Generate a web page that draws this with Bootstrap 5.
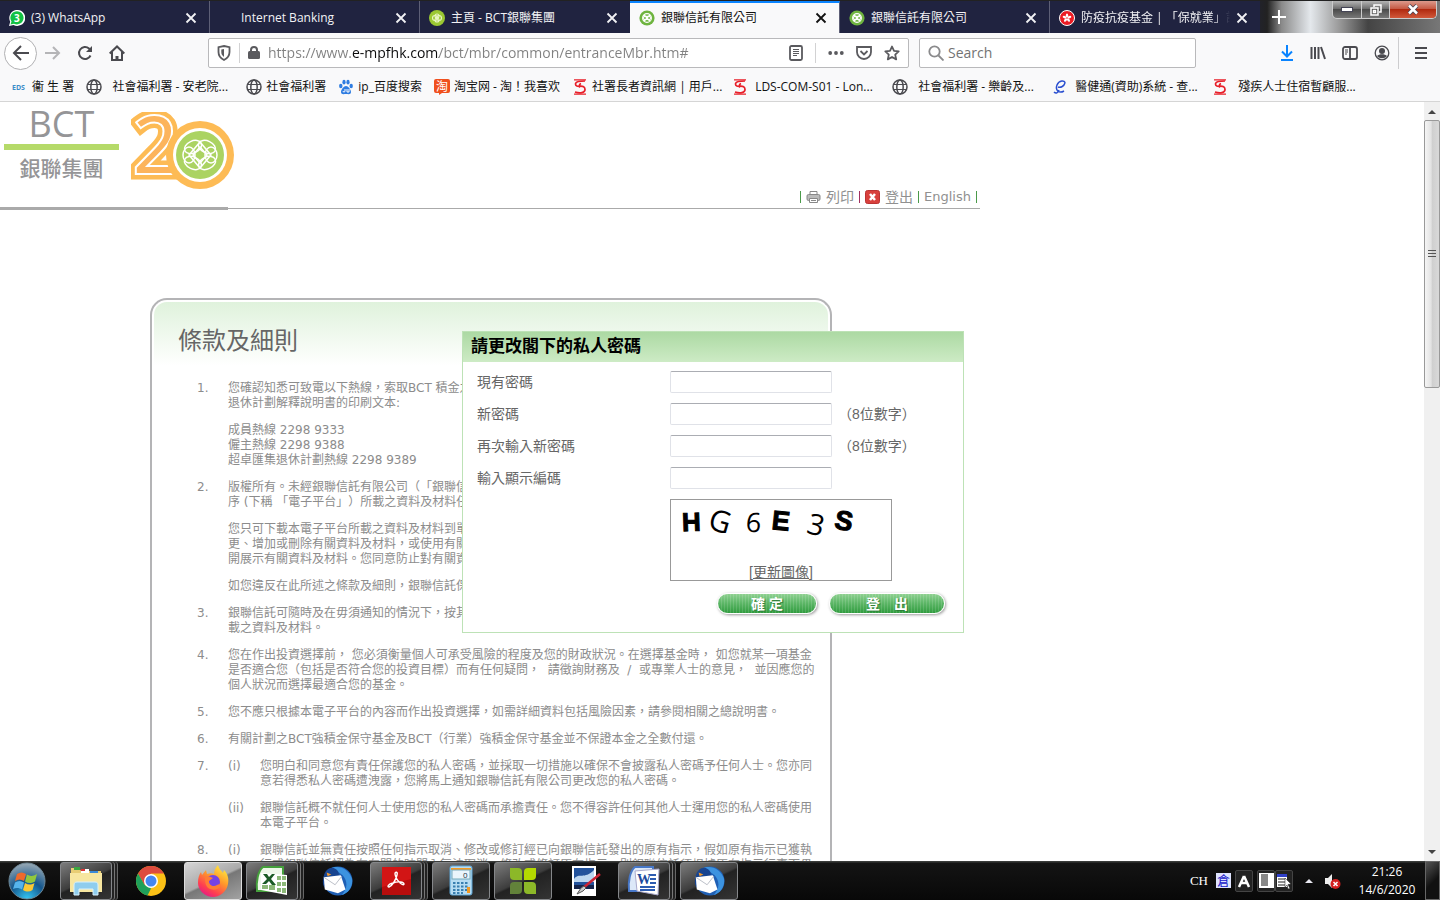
<!DOCTYPE html>
<html lang="zh-Hant">
<head>
<meta charset="UTF-8">
<meta name="viewport" content="width=device-width, initial-scale=1.0">
<title>銀聯信託有限公司</title>
<link href="https://cdn.jsdelivr.net/npm/bootstrap@5.3.0/dist/css/bootstrap.min.css" rel="stylesheet">
<style>
    body { font: 12px/16px "Open Sans", "Noto Sans CJK TC", sans-serif; color: #111; background: #fff; text-spacing-trim: space-all; }
    button { font: inherit; color: inherit; }
    svg { display: block; flex: none; }
    .plain-btn { border: 0; padding: 0; background: none; }

    /* browser window */
    .title-strip { height: 33px; background: linear-gradient(90deg, #202340 86%, #222 88%, #8a8a8a 89%, #e4e8ec 91%, #9a9a9a 93%, #444 95%, #777); border-top: 1px solid #222; }
    .tab-item { width: 210px; padding: 2px 12px 0 9px; gap: 6px; background: #202340; color: #f2f2f5; border-right: 1px solid #5d5f76; }
    .tab-item.current { background: #f9f9fa; color: #111; border-top: 2px solid #0a84ff; padding-top: 0; }
    .tab-icon { width: 16px; height: 16px; }
    .tab-fade { -webkit-mask-image: linear-gradient(90deg, #000 88%, transparent); }
    .win-buttons { height: 18px; border: 1px solid #ccc; border-top: 0; border-radius: 0 0 5px 5px; overflow: hidden; background: linear-gradient(#b5b5b5, #6d6d6d 45%, #4b4b4b 50%, #777); margin-right: 3px; }
    .win-buttons button { width: 28px; }
    .win-buttons button + button { border-left: 1px solid #ccc; }
    .win-buttons .win-close { width: 47px; background: linear-gradient(#dc9a8c, #c65b45 45%, #b12a10 50%, #d1583a); }
    .nav-strip { height: 40px; background: #f9f9fa; padding: 0 13px 0 4px; color: #4a4a4f; }
    .back-btn { width: 33px; height: 33px; border: 1px solid #b1b1b3; border-radius: 50%; background: #fff; }
    .field-box { height: 30px; border: 1px solid #b9b9bb; border-radius: 2px; background: #fff; }
    .field-box input { border: 0; outline: 0; padding: 0; min-width: 0; font: 14px/20px "Open Sans", sans-serif; color: #737373; background: transparent; }
    .field-box .url-input { background: linear-gradient(90deg, #808080 84px, #0c0c0d 84px, #0c0c0d 171px, #808080 171px); -webkit-background-clip: text; background-clip: text; -webkit-text-fill-color: transparent; }
    .reader-rule { margin: 0 12px; }
    .search-box { width: 277px; margin-left: 10px; }
    .search-box input::placeholder { color: #737373; opacity: 1; }
    .nav-gap { width: 83px; }
    .marks-strip { height: 29px; background: #f9f9fa; border-bottom: 1px solid #d5d5d5; padding-left: 12px; }
    .mark-item { gap: 4px; padding-right: 12px; color: #111; text-decoration: none; white-space: pre; }
    .mark-wide { width: 160px; padding-right: 0; }

    /* page */
    .page-view { min-height: 0; }
    .site-head, .rule-row { max-width: 980px; }
    .site-head { height: 105px; padding: 2px 3px 0 4px; }
    .logo-word { width: 115px; color: #959597; }
    .logo-en { font-size: 36px; line-height: 40px; }
    .logo-bar { height: 6px; background: #b5da69; }
    .logo-zh { font-size: 21px; line-height: 36px; font-weight: 500; }
    .logo-mark { margin: 8px 0 0 12px; }
    .head-links { gap: 5px; font: 13px/20px "DejaVu Sans", "Noto Sans CJK TC", sans-serif; color: #909090; }
    .head-links a { color: #909090; text-decoration: none; }
    .head-links .zh-link { font-size: 14px; }
    .head-links .sep { width: 1px; height: 12px; background: #4a9a4a; }
    .head-links .sep-alt { background: #a03060; }
    .rule-thick { width: 228px; height: 3px; background: #aaa; }
    .rule-thin { height: 1px; background: #aaa; }
    .terms-panel { max-width: 682px; margin: 88px 0 0 150px; padding: 2px; border: 2px solid #b4b4b6; border-bottom: 0; border-radius: 17px 17px 0 0; }
    .terms-inner { border-radius: 13px 13px 0 0; background: linear-gradient(#dff2dc, #fff 64px); padding: 22px 16px 0 24px; }
    .terms-inner h1 { font-size: 24px; line-height: 32px; color: #666; margin: 0 0 25px; font-weight: 400; }
    .terms-list { font: 12px/15px "DejaVu Sans", "Noto Sans CJK TC", sans-serif; color: #8c8c8c; padding-left: 19px; white-space: nowrap; }
    .terms-list p { margin: 0 0 12px; }
    .term-no { width: 31px; flex: none; }
    .term-sub { width: 32px; flex: none; }

    /* password dialog */
    .pwd-dialog { left: 462px; top: 229px; width: 502px; height: 302px; background: #fff; border: 1px solid #bde2b6; color: #666; font: 14px/22px "Liberation Sans", "Noto Sans CJK TC", sans-serif; }
    .pwd-dialog h2 { margin: 0; padding: 0 8px; font-size: 17px; line-height: 30px; font-weight: 700; color: #000; background: linear-gradient(#acd9a3, #cdebc5); }
    .pwd-form { padding: 9px 18px 0 14px; }
    .pwd-row { margin-bottom: 10px; }
    .pwd-row label, .pwd-space { width: 193px; flex: none; }
    .pwd-row input { width: 162px; height: 22px; padding: 1px 4px; border: 1px solid #e0e2e8; border-top-color: #abadb3; border-radius: 2px; margin-right: 6px; }
    .captcha { width: 222px; height: 82px; border: 1px solid #999; }
    .captcha button { color: #666; line-height: 16px; text-decoration: underline; }
    .green-btn { height: 21px; border: 1px solid #fff; border-radius: 11px; color: #fff; font-size: 14px; line-height: 18px; font-weight: 700; text-shadow: 1px 1px 1px #2c7a35; box-shadow: 1px 1px 3px #999; background: repeating-linear-gradient(90deg, rgba(255,255,255,.13) 0 1px, transparent 1px 3px), linear-gradient(#8fd191, #5fb869 45%, #309c3f); }
    .ok-btn { width: 100px; }
    .out-btn { width: 116px; }

    .side-scroll { width: 16px; background: #f0f0f0; flex: none; }
    .side-scroll button { height: 18px; }
    .scroll-thumb { height: 268px; border: 1px solid #999; border-radius: 2px; background: linear-gradient(90deg, #f5f5f5, #e2e2e2 45%, #cfcfcf 50%, #d9d9d9); }

    /* taskbar */
    .task-strip { height: 40px; background: linear-gradient(#3a3c3a 1px, #141414 2px, #080808); color: #fff; padding-left: 8px; }
    .task-btn { width: 58px; height: 38px; border: 1px solid transparent; border-radius: 3px; margin-right: 4px; padding: 0; background: none; }
    .task-open { border-color: #85878a; background: linear-gradient(155deg, #7c7c7c, #3d3d3d 48%, #222 52%, #343434); }
    .task-front { border-color: #ddd; background: linear-gradient(155deg, #d5d5d5, #aaa 48%, #777 52%, #a2a2a2); }
    .task-stack { width: 52px; margin-right: 10px; box-shadow: 2px 0 #222, 3px 0 #777, 5px 0 #222, 6px 0 #666; }
    .start-btn { margin-right: 14px; }
    .tray-lang { font: 13px/16px "Liberation Serif", serif; }
    .tray-box { width: 18px; height: 22px; border: 1px solid #444; border-radius: 2px; background: #222; }
    .clock { width: 76px; line-height: 18px; }
    .peek-btn { width: 15px; border: 1px solid #666; background: linear-gradient(135deg, #555, #111 55%); }
</style>
</head>
<body class="d-flex flex-column vh-100 overflow-hidden">

    <!-- shared icons -->
    <svg width="0" height="0" class="position-absolute">
        <defs>
            <symbol id="i-close" viewBox="0 0 12 12"><path d="M1.5 1.5l9 9M10.5 1.5l-9 9" stroke="currentColor" stroke-width="1.8"/></symbol>
            <symbol id="i-bct" viewBox="0 0 16 16"><circle cx="8" cy="8" r="7.6" fill="#6eb43f"/><g fill="none" stroke="#fff" stroke-width="1.1"><circle cx="8" cy="8" r="4.4"/><circle cx="6.4" cy="8" r="1.9"/><circle cx="9.6" cy="8" r="1.9"/><path d="M5 5l6 6M11 5l-6 6"/></g></symbol>
            <symbol id="i-globe" viewBox="0 0 16 16"><g fill="none" stroke="#4a4a4f" stroke-width="1.5"><circle cx="8" cy="8" r="7"/><ellipse cx="8" cy="8" rx="3.2" ry="7"/><path d="M1.5 5.5h13M1.5 10.5h13" stroke-width="1.2"/></g></symbol>
            <symbol id="i-swd" viewBox="0 0 16 16"><path d="M2 .8h12M2 15.2h12" stroke="#e8202a" stroke-width="1.2"/><path d="M13 2C9 2 3.500 2.500 3.500 5c0 2 2 2.500 4.500 2.200C11 7 13 8 13 10.500c0 3.500-5 4-10 2.500M9 4.500c-2 1-2 2.500-1 4" fill="none" stroke="#e8202a" stroke-width="1.7"/></symbol>
            <symbol id="i-bird" viewBox="0 0 34 34"><circle cx="18" cy="17" r="15.500" fill="#1f5fb4"/><path d="M9 4C18-1 30 4 33 15c1 8-4 15-11 17 6-7 7-14 1-21-4-4-9-5-13-7z" fill="#3c93e0"/><path d="M3 12C4 5 11 1 15 4c4 2 5 6 3 10L4 24C1 20 2 16 3 12z" fill="#174490"/><path d="M3 13l18-2 5 15-8 4-14-4z" fill="#fff"/><path d="M3 13l12 8 7-9" fill="none" stroke="#b8bcc4"/><path d="M6 8l5 2-4 2z" fill="#f29a2e"/></symbol>
        </defs>
    </svg>

    <header>
        <div class="title-strip d-flex">
            <div class="tab-item d-flex align-items-center">
                <svg class="tab-icon" viewBox="0 0 16 16"><path d="M0 16l1.200-4.300A8 8 0 1 1 4.500 15z" fill="#fff"/><path d="M1.500 14.500l1-3A6.600 6.600 0 1 1 5 13.700z" fill="#13c143"/><text x="5" y="12" font-size="10" font-weight="700" fill="#fff">3</text></svg>
                <span class="flex-fill">(3) WhatsApp</span>
                <button class="plain-btn" aria-label="Close"><svg width="12" height="12"><use href="#i-close"/></svg></button>
            </div>
            <div class="tab-item d-flex align-items-center">
                <span class="tab-icon"></span>
                <span class="flex-fill">Internet Banking</span>
                <button class="plain-btn" aria-label="Close"><svg width="12" height="12"><use href="#i-close"/></svg></button>
            </div>
            <div class="tab-item d-flex align-items-center border-end-0">
                <svg class="tab-icon" viewBox="0 0 16 16"><circle cx="8" cy="8" r="8" fill="#9bc832"/><g fill="none" stroke="#e8f5c4" stroke-width="1.100"><circle cx="6" cy="8" r="2.500"/><circle cx="10" cy="8" r="2.500"/><circle cx="8" cy="6" r="2"/><circle cx="8" cy="10" r="2"/></g></svg>
                <span class="flex-fill">主頁 - BCT銀聯集團</span>
                <button class="plain-btn" aria-label="Close"><svg width="12" height="12"><use href="#i-close"/></svg></button>
            </div>
            <div class="tab-item current d-flex align-items-center">
                <svg class="tab-icon"><use href="#i-bct"/></svg>
                <span class="flex-fill">銀聯信託有限公司</span>
                <button class="plain-btn" aria-label="Close"><svg width="12" height="12"><use href="#i-close"/></svg></button>
            </div>
            <div class="tab-item d-flex align-items-center">
                <svg class="tab-icon"><use href="#i-bct"/></svg>
                <span class="flex-fill">銀聯信託有限公司</span>
                <button class="plain-btn" aria-label="Close"><svg width="12" height="12"><use href="#i-close"/></svg></button>
            </div>
            <div class="tab-item d-flex align-items-center border-end-0">
                <svg class="tab-icon" viewBox="0 0 16 16"><circle cx="8" cy="8" r="7.500" fill="#ec1c24" stroke="#fff"/><g fill="#fff"><ellipse cx="8" cy="5.500" rx="1.200" ry="2"/><ellipse cx="8" cy="5.500" rx="1.200" ry="2" transform="rotate(72 8 8)"/><ellipse cx="8" cy="5.500" rx="1.200" ry="2" transform="rotate(144 8 8)"/><ellipse cx="8" cy="5.500" rx="1.200" ry="2" transform="rotate(216 8 8)"/><ellipse cx="8" cy="5.500" rx="1.200" ry="2" transform="rotate(288 8 8)"/></g></svg>
                <span class="flex-fill text-nowrap overflow-hidden tab-fade">防疫抗疫基金 | 「保就業」計劃</span>
                <button class="plain-btn" aria-label="Close"><svg width="12" height="12"><use href="#i-close"/></svg></button>
            </div>
            <button class="plain-btn ms-2 ps-1 text-white" aria-label="New tab"><svg width="14" height="14"><path d="M7 0v14M0 7h14" stroke="currentColor" stroke-width="2"/></svg></button>
            <div class="win-buttons d-flex ms-auto">
                <button class="plain-btn d-flex justify-content-center align-items-center" aria-label="Minimize"><svg width="12" height="6"><rect x=".5" y=".5" width="11" height="4" fill="#fff" stroke="#445"/></svg></button>
                <button class="plain-btn d-flex justify-content-center align-items-center" aria-label="Restore"><svg width="12" height="12" fill="none" stroke="#fff" stroke-width="1.500"><path d="M4 3V1h7v7H9"/><rect x="1" y="4" width="7" height="7"/><rect x="3.500" y="6.500" width="2" height="2"/></svg></button>
                <button class="plain-btn win-close d-flex justify-content-center align-items-center" aria-label="Close window"><svg width="12" height="11"><path d="M2 1.500l8 8M10 1.500l-8 8" stroke="#445" stroke-width="4"/><path d="M2 1.500l8 8M10 1.500l-8 8" stroke="#fff" stroke-width="2.500"/></svg></button>
            </div>
        </div>

        <div class="nav-strip d-flex align-items-center">
            <button class="back-btn plain-btn d-flex justify-content-center align-items-center me-2" aria-label="Back"><svg width="18" height="16" fill="none" stroke="currentColor" stroke-width="2"><path d="M17 8H2M9 1L2 8l7 7"/></svg></button>
            <button class="plain-btn me-3" aria-label="Forward"><svg width="16" height="16" fill="none" stroke="#b5b5b7" stroke-width="2"><path d="M0 8h14M8 2l6 6-6 6"/></svg></button>
            <button class="plain-btn me-3" aria-label="Reload"><svg width="16" height="16" fill="none" stroke="currentColor" stroke-width="2"><path d="M13.500 10.500A6 6 0 1 1 12 3.500l2 2.500"/><path d="M15 1v6H9z" fill="currentColor" stroke="none"/></svg></button>
            <button class="plain-btn" aria-label="Home"><svg width="16" height="16" fill="none" stroke="currentColor" stroke-width="2"><path d="M.7 8.500L8 1.500l7.300 7M3 7v8h10V7"/><path d="M8 15v-4" stroke-width="3"/></svg></button>
            <div class="nav-gap flex-shrink-1"></div>
            <div class="field-box d-flex align-items-center flex-fill px-2">
                <svg width="14" height="16" fill="none" stroke="#5a5a5e" stroke-width="1.800"><path d="M7 1l5.500 1.200V7c0 4-2.500 6.500-5.500 8-3-1.500-5.500-4-5.500-8V2.200z"/><path d="M7 4v8c-2-1.500-2.700-3-2.700-5V4.500z" fill="#5a5a5e" stroke="none"/></svg>
                <span class="vr mx-2 my-1 opacity-10"></span>
                <svg width="12" height="16"><rect y="6" width="12" height="8" rx="1.500" fill="#5a5a5e"/><path d="M3 7V5a3 3 0 0 1 6 0v2" fill="none" stroke="#5a5a5e" stroke-width="2"/></svg>
                <input class="url-input flex-fill ms-2" type="text" aria-label="Address" value="https://www.e-mpfhk.com/bct/mbr/common/entranceMbr.htm#">
                <svg width="14" height="16" fill="none" stroke="#5a5a5e"><rect x="1" y="1" width="12" height="14" rx="1.500" stroke-width="1.800"/><path d="M4 4.500h6M4 6.500h6M4 8.500h6M4 10.500h4"/></svg>
                <span class="vr reader-rule my-1 opacity-10"></span>
                <svg width="16" height="16" fill="#5a5a5e"><circle cx="2.200" cy="8" r="1.900"/><circle cx="8" cy="8" r="1.900"/><circle cx="13.800" cy="8" r="1.900"/></svg>
                <svg class="mx-2 ps-1" width="20" height="16" fill="none" stroke="#5a5a5e" stroke-width="1.800"><path d="M1 2h14v5a7 7 0 0 1-14 0z"/><path d="M4.500 6L8 9.500 11.500 6"/></svg>
                <svg class="ms-1" width="16" height="16"><path d="M8 1.500l2 4.400 4.700.5-3.500 3.200 1 4.800L8 12l-4.200 2.400 1-4.800L1.300 6.400 6 5.900z" fill="none" stroke="#5a5a5e" stroke-width="1.800" stroke-linejoin="round"/></svg>
            </div>
            <div class="field-box search-box d-flex align-items-center px-2">
                <svg width="16" height="16" fill="none" stroke="#8a8a8c" stroke-width="1.800"><circle cx="6.500" cy="6.500" r="5.200"/><path d="M10.500 10.500l5 5"/></svg>
                <input class="flex-fill ms-1" type="search" aria-label="Search" placeholder="Search">
            </div>
            <div class="d-flex align-items-center gap-3 ms-5 ps-4">
                <button class="plain-btn ms-2 ps-1" aria-label="Downloads"><svg width="14" height="16" fill="none" stroke="#0a84ff" stroke-width="2"><path d="M7 0v11M2 6.500l5 5 5-5M1 15h12"/></svg></button>
                <button class="plain-btn" aria-label="Library"><svg width="16" height="16" stroke="currentColor" stroke-width="2"><path d="M1.500 2v12M5 2v12M8.500 2v12M11 2l4 12"/></svg></button>
                <button class="plain-btn" aria-label="Sidebar"><svg width="16" height="16" fill="none" stroke="currentColor"><rect x="1" y="2" width="14" height="12" rx="2" stroke-width="1.800"/><path d="M8 2v12" stroke-width="1.800"/><path d="M3 5h3M3 7h3M3 9h2"/></svg></button>
                <button class="plain-btn" aria-label="Account"><svg width="16" height="16"><circle cx="8" cy="8" r="6.800" fill="none" stroke="currentColor" stroke-width="1.300"/><circle cx="8" cy="6" r="3" fill="currentColor"/><path d="M3 11c2-2.500 8-2.500 10 0-2.500 3-7.500 3-10 0z" fill="currentColor"/></svg></button>
            </div>
            <span class="vr my-1 ms-2 me-3"></span>
            <button class="plain-btn" aria-label="Menu"><svg width="12" height="14" stroke="currentColor" stroke-width="2"><path d="M0 2h12M0 7h12M0 12h12"/></svg></button>
        </div>

        <nav class="marks-strip d-flex align-items-center">
            <a class="mark-item d-flex" href="#"><svg width="16" height="16"><text x="0" y="11" font-size="7" font-weight="700" fill="#3b8cc8">EDS</text></svg>衞 生 署</a>
            <a class="mark-item mark-wide d-flex" href="#"><svg width="16" height="16"><use href="#i-globe"/></svg>  社會福利署 - 安老院...</a>
            <a class="mark-item d-flex" href="#"><svg width="16" height="16"><use href="#i-globe"/></svg>社會福利署</a>
            <a class="mark-item d-flex" href="#"><svg width="16" height="16" fill="#2f7de1"><ellipse cx="2.800" cy="7" rx="1.700" ry="2.300"/><ellipse cx="6" cy="3.200" rx="1.600" ry="2.400"/><ellipse cx="10" cy="3.200" rx="1.600" ry="2.400"/><ellipse cx="13.200" cy="7" rx="1.700" ry="2.300"/><path d="M8 7c2 0 5 3.500 5 6 0 3-3 2-5 2s-5 1-5-2c0-2.500 3-6 5-6z"/><path d="M5 12a1 1 0 1 0 2 0v-2M9 10v3h2v-3" fill="none" stroke="#fff"/></svg>ip_百度搜索</a>
            <a class="mark-item d-flex" href="#"><svg width="16" height="16"><path d="M2 0h12a2 2 0 0 1 2 2v10a2 2 0 0 1-2 2H8l-3 2v-2H2a2 2 0 0 1-2-2V2a2 2 0 0 1 2-2z" fill="#f0501e"/><text x="2" y="12" font-size="12" fill="#fff">淘</text></svg>淘宝网 - 淘！我喜欢</a>
            <a class="mark-item mark-wide d-flex" href="#"><svg width="16" height="16"><use href="#i-swd"/></svg>社署長者資訊網 | 用戶...</a>
            <a class="mark-item mark-wide d-flex" href="#"><svg width="16" height="16"><use href="#i-swd"/></svg> LDS-COM-S01 - Lon...</a>
            <a class="mark-item mark-wide d-flex" href="#"><svg width="16" height="16"><use href="#i-globe"/></svg>  社會福利署 - 樂齡及...</a>
            <a class="mark-item mark-wide d-flex" href="#"><svg width="16" height="16" fill="none" stroke="#2a4fd0" stroke-width="1.500"><path d="M13 4C13 1 7 1 5 6S7 15 12 12M6 8c3 1 6-1 7-4M2 13c2 2 4 1 5-2"/></svg> 醫健通(資助)系統 - 查...</a>
            <a class="mark-item mark-wide d-flex" href="#"><svg width="16" height="16"><use href="#i-swd"/></svg>  殘疾人士住宿暫顧服...</a>
        </nav>
    </header>

    <div class="page-view flex-fill d-flex overflow-hidden">
        <main class="flex-fill position-relative overflow-hidden">
            <div class="site-head d-flex">
                <div class="logo-word text-center">
                    <div class="logo-en">BCT</div>
                    <div class="logo-bar"></div>
                    <div class="logo-zh">銀聯集團</div>
                </div>
                <svg class="logo-mark" width="106" height="78" viewBox="0 0 106 78">
                    <g font-family="Open Sans" font-size="78" font-weight="400" fill="#fcb45c">
                        <text x="2" y="61" stroke="#fdbb55" stroke-width="13">2</text>
                        <text x="2" y="61" stroke="#fff" stroke-width="4">2</text>
                        <text x="2" y="61">2</text>
                    </g>
                    <circle cx="69" cy="43" r="34" fill="#fdbb55"/>
                    <circle cx="69" cy="43" r="27" fill="#fff"/>
                    <circle cx="69" cy="43" r="24" fill="#abd362"/>
                    <g fill="none" stroke="#fff" stroke-width="1.500">
                        <ellipse cx="62" cy="35" rx="9" ry="6" transform="rotate(-25 62 35)"/><ellipse cx="76" cy="35" rx="9" ry="6" transform="rotate(25 76 35)"/>
                        <ellipse cx="62" cy="51" rx="9" ry="6" transform="rotate(25 62 51)"/><ellipse cx="76" cy="51" rx="9" ry="6" transform="rotate(-25 76 51)"/>
                        <ellipse cx="58" cy="43" rx="6" ry="8"/><ellipse cx="80" cy="43" rx="6" ry="8"/>
                        <path d="M58 43l11-13 11 13-11 13z"/><path d="M62 43l7-8 7 8-7 8z"/>
                    </g>
                </svg>
                <div class="head-links d-flex align-items-center align-self-end ms-auto">
                    <span class="sep"></span>
                    <svg width="15" height="14" fill="#fff" stroke="#888"><path d="M4 5V1.500h7V5"/><rect x="1" y="4.500" width="13" height="6" rx="1.500" fill="#bbb"/><path d="M3.500 8.500h8v4h-8zM5 10.500h5"/></svg>
                    <a class="zh-link" href="#">列印</a>
                    <span class="sep sep-alt"></span>
                    <svg width="15" height="14"><rect x=".5" y=".5" width="14" height="13" rx="2" fill="#d8403c" stroke="#b33"/><path d="M5 4l5 6M10 4l-5 6" stroke="#fff" stroke-width="2.500"/></svg>
                    <a class="zh-link" href="#">登出</a>
                    <span class="sep"></span>
                    <a href="#">English</a>
                    <span class="sep"></span>
                </div>
            </div>
            <div class="rule-row d-flex align-items-center">
                <div class="rule-thick"></div>
                <div class="rule-thin flex-fill"></div>
            </div>

            <section class="terms-panel">
                <div class="terms-inner">
                    <h1>條款及細則</h1>
                    <div class="terms-list">
                        <div class="d-flex">
                            <div class="term-no">1.</div>
                            <div>
                                <p>您確認知悉可致電以下熱線，索取BCT 積金之選、BCT（強積金）行業計劃及超卓匯集<br>退休計劃解釋說明書的印刷文本:</p>
                                <p>成員熱線 2298 9333<br>僱主熱線 2298 9388<br>超卓匯集退休計劃熱線 2298 9389</p>
                            </div>
                        </div>
                        <div class="d-flex">
                            <div class="term-no">2.</div>
                            <div>
                                <p>版權所有。未經銀聯信託有限公司（「銀聯信託」）事先書面同意，本網站及流動應用程<br>序 (下稱 「電子平台」）所載之資料及材料任何部分均不得複製或分發。</p>
                                <p>您只可下載本電子平台所載之資料及材料到單一電腦作個人用途。您不得複製、修改、變<br>更、增加或刪除有關資料及材料，或使用有關資料及材料作任何商業用途，亦不得向外公<br>開展示有關資料及材料。您同意防止對有關資料及材料作任何未經授權之複製。</p>
                                <p>如您違反在此所述之條款及細則，銀聯信託保留一切追究權利。</p>
                            </div>
                        </div>
                        <div class="d-flex">
                            <div class="term-no">3.</div>
                            <p>銀聯信託可隨時及在毋須通知的情況下，按其絕對酌情權更改或修訂本電子平台及其所<br>載之資料及材料。</p>
                        </div>
                        <div class="d-flex">
                            <div class="term-no">4.</div>
                            <p>您在作出投資選擇前， 您必須衡量個人可承受風險的程度及您的財政狀況。在選擇基金時， 如您就某一項基金<br>是否適合您（包括是否符合您的投資目標）而有任何疑問，&nbsp; 請徵詢財務及 &nbsp;/ &nbsp;或專業人士的意見，&nbsp; 並因應您的<br>個人狀況而選擇最適合您的基金。</p>
                        </div>
                        <div class="d-flex">
                            <div class="term-no">5.</div>
                            <p>您不應只根據本電子平台的內容而作出投資選擇，如需詳細資料包括風險因素，請參閱相關之總說明書。</p>
                        </div>
                        <div class="d-flex">
                            <div class="term-no">6.</div>
                            <p>有關計劃之BCT強積金保守基金及BCT（行業）強積金保守基金並不保證本金之全數付還。</p>
                        </div>
                        <div class="d-flex">
                            <div class="term-no">7.</div>
                            <div>
                                <div class="d-flex"><div class="term-sub">(i)</div><p>您明白和同意您有責任保護您的私人密碼，並採取一切措施以確保不會披露私人密碼予任何人士。您亦同<br>意若得悉私人密碼遭洩露，您將馬上通知銀聯信託有限公司更改您的私人密碼。</p></div>
                                <div class="d-flex"><div class="term-sub">(ii)</div><p>銀聯信託概不就任何人士使用您的私人密碼而承擔責任。您不得容許任何其他人士運用您的私人密碼使用<br>本電子平台。</p></div>
                            </div>
                        </div>
                        <div class="d-flex">
                            <div class="term-no">8.</div>
                            <div class="d-flex"><div class="term-sub">(i)</div><p>銀聯信託並無責任按照任何指示取消、修改或修訂經已向銀聯信託發出的原有指示，假如原有指示已獲執<br>行或銀聯信託認為在有關的時間內無法取消、修改或修訂原有指示，則銀聯信託須根據原有指示行事而毋</p></div>
                        </div>
                    </div>
                </div>
            </section>

            <section class="pwd-dialog position-absolute" role="dialog" aria-labelledby="pwd-title">
                <h2 id="pwd-title">請更改閣下的私人密碼</h2>
                <form class="pwd-form">
                    <div class="pwd-row d-flex"><label for="old-pwd">現有密碼</label><input type="password" id="old-pwd"></div>
                    <div class="pwd-row d-flex"><label for="new-pwd">新密碼</label><input type="password" id="new-pwd"><span>（8位數字）</span></div>
                    <div class="pwd-row d-flex"><label for="again-pwd">再次輸入新密碼</label><input type="password" id="again-pwd"><span>（8位數字）</span></div>
                    <div class="pwd-row d-flex"><label for="code">輸入顯示編碼</label><input type="text" id="code"></div>
                    <div class="d-flex">
                        <div class="pwd-space"></div>
                        <div class="captcha d-flex flex-column justify-content-between align-items-center">
                            <svg width="220" height="50" font-family="Open Sans" fill="#000">
                                <g font-family="Liberation Sans" font-size="27" font-weight="700" stroke="#000">
                                    <text x="11" y="31" font-size="26" transform="rotate(-2 20 22)">H</text>
                                    <text x="101" y="30" transform="rotate(6 110 21)">E</text>
                                    <text x="164" y="30" transform="rotate(10 173 21)">S</text>
                                </g>
                                <g font-size="30">
                                    <text x="38" y="32" transform="rotate(16 49 22)">G</text>
                                    <text x="75" y="32" font-size="27" transform="rotate(4 83 22)">6</text>
                                    <text x="137" y="35" font-size="29" transform="rotate(14 145 24)">3</text>
                                </g>
                            </svg>
                            <button type="button" class="plain-btn">[更新圖像]</button>
                        </div>
                    </div>
                    <div class="d-flex justify-content-end gap-2 pt-2 mt-1">
                        <button type="button" class="green-btn ok-btn me-1 p-0">確 定</button>
                        <button type="button" class="green-btn out-btn p-0">登　出</button>
                    </div>
                </form>
            </section>
        </main>
        <div class="side-scroll d-flex flex-column">
            <button class="plain-btn d-flex justify-content-center align-items-center" aria-label="Scroll up"><svg width="8" height="5"><path d="M0 5l4-4 4 4z" fill="#444"/></svg></button>
            <div class="scroll-thumb d-flex justify-content-center align-items-center"><svg width="8" height="8" stroke="#555"><path d="M0 .5h8M0 3.500h8M0 6.500h8"/></svg></div>
            <button class="plain-btn d-flex justify-content-center align-items-center mt-auto" aria-label="Scroll down"><svg width="8" height="5"><path d="M0 0l4 4 4-4z" fill="#444"/></svg></button>
        </div>
    </div>

    <footer class="task-strip d-flex align-items-center">
        <button class="plain-btn start-btn" aria-label="Start">
            <svg width="38" height="38" viewBox="0 0 38 38">
                <defs><radialGradient id="orb" cx=".5" cy="1" r="1"><stop offset="0" stop-color="#35c8f5"/><stop offset=".5" stop-color="#14568c"/><stop offset="1" stop-color="#9aaab5"/></radialGradient></defs>
                <circle cx="19" cy="19" r="18" fill="url(#orb)" stroke="#6d8796"/>
                <path d="M9 12c3-2 6-2 9 0l-2 7c-3-2-6-2-9 0z" fill="#ee6a2c"/><path d="M19 12.500c3 2 6 2 10-.5l-2 7.500c-4 2-7 2-10 0z" fill="#92c83e"/>
                <path d="M7 20.500c3-2 6-2 9 0l-2 7c-3-2-6-2-9-.5z" fill="#56b4ec"/><path d="M17 21c3 2 6 2 9.500 0l-2 7c-3 2-6 2-9.500 0z" fill="#fbc934"/>
            </svg>
        </button>
        <button class="task-btn task-open task-stack d-flex justify-content-center align-items-center" aria-label="Explorer">
            <svg width="34" height="32"><path d="M2 3h8l2 3h20v21H2z" fill="#e8cd74"/><path d="M5 2h6v3H5z" fill="#3aa640"/><path d="M12 4h8v4h-8z" fill="#fff"/><path d="M12 4h4v2h-4z" fill="#d33"/><path d="M21 6h8v3h-8z" fill="#3a8ad8"/><path d="M1 8h32v19H1z" fill="#f7e6a0"/><path d="M5 30V20c0-2 1-3 3-3h18c2 0 3 1 3 3v10h-5v-6H10v6z" fill="#8fcdee" stroke="#d8f1fd"/></svg>
        </button>
        <button class="task-btn d-flex justify-content-center align-items-center" aria-label="Chrome">
            <svg width="30" height="30" viewBox="0 0 30 30"><circle cx="15" cy="15" r="15" fill="#fbc116"/><path d="M2 7.500A15 15 0 0 1 28 7.500H15L8.500 19z" fill="#dd4b3e"/><path d="M2 7.500L8.500 18.800 15 22.500 11.500 29.600A15 15 0 0 1 2 7.500z" fill="#1fa05a"/><circle cx="15" cy="15" r="7" fill="#fff"/><circle cx="15" cy="15" r="5.500" fill="#4587f0"/></svg>
        </button>
        <button class="task-btn task-front d-flex justify-content-center align-items-center" aria-label="Firefox">
            <svg width="32" height="32" viewBox="0 0 32 32"><defs><linearGradient id="fox" x1=".8" y1="0" x2=".2" y2="1"><stop offset="0" stop-color="#fff044"/><stop offset=".4" stop-color="#ff9a2a"/><stop offset=".75" stop-color="#ff3e50"/><stop offset="1" stop-color="#e01590"/></linearGradient></defs><path d="M21 0c1 4 3 5 5 8l1-3c4 4 5 9 4 14-1 7-8 13-15 13S1 26 1 18C1 13 2 10 4 7l1 3 4-5 1 4c3-1 5-1 7 0 0-4 2-7 4-9z" fill="url(#fox)"/><circle cx="16" cy="17" r="7" fill="#7542e5"/><path d="M8 12c3-1 6 0 8 1l-4 3c0 5 5 6 8 4 2-1 4-1 4 1-3 5-13 5-15-1-1-3-1-5-1-8z" fill="#ff7d34"/></svg>
        </button>
        <button class="task-btn task-open task-stack d-flex justify-content-center align-items-center" aria-label="Excel">
            <svg width="34" height="32"><path d="M8 2h20v24H2C1 16 3 6 8 2z" fill="#eef7e9" stroke="#45a03c" stroke-width="2"/><path d="M6 8l26 2v20l-26-5z" fill="#fff"/><g fill="#8cb878"><path d="M22 11h4v4h-4zM27 11h4v4h-4zM22 17h4v4h-4zM27 17h4v4h-4zM22 23h4v4h-4zM27 23h4v5h-4zM7 20h6v4H7zM14 20h6v5h-6z"/></g><path d="M8 9h4l2 3 3-3h3l-4 5 5 6h-4l-3-4-3 3H7l5-5z" fill="#1b5a25"/></svg>
        </button>
        <button class="task-btn d-flex justify-content-center align-items-center" aria-label="Thunderbird"><svg width="32" height="32"><use href="#i-bird"/></svg></button>
        <button class="task-btn task-open task-stack d-flex justify-content-center align-items-center" aria-label="Acrobat">
            <svg width="29" height="28"><rect width="29" height="28" fill="#b80d0d"/><path d="M0 0h29v12L0 20z" fill="#d21515"/><path d="M13 7c0-3 3-2 2 1-1 5-5 11-8 12-2 0-1-3 4-4 5-2 11-1 11 1 0 3-8-3-9-10z" fill="none" stroke="#fff" stroke-width="1.400"/></svg>
        </button>
        <button class="task-btn task-open d-flex justify-content-center align-items-center" aria-label="Calculator">
            <svg width="24" height="31"><rect x="1" y="1" width="22" height="29" rx="2" fill="#b7dcf2" stroke="#5aa2d2"/><path d="M2 3h20v2H2z" fill="#f39a24"/><rect x="3" y="5" width="18" height="9" fill="#eaf5fc" stroke="#7ab"/><text x="14" y="13" font-size="8" fill="#234">0</text><path d="M4 18h15M4 21.500h15M4 25h15M4 28h10" stroke="#3a7fb0" stroke-width="2.200" stroke-dasharray="2.500 1.500"/><path d="M18 22h3v6h-3z" fill="#f39a24"/></svg>
        </button>
        <button class="task-btn task-open d-flex justify-content-center align-items-center" aria-label="Clover">
            <svg width="26" height="26"><path d="M0 0h8q4 0 4 4v8H4q-4 0-4-4z" fill="#8cb828"/><path d="M26 0h-8q-4 0-4 4v8h8q4 0 4-4z" fill="#b4d900"/><path d="M0 26h8q4 0 4-4v-8H4q-4 0-4 4z" fill="#62823a"/><path d="M26 26h-8q-4 0-4-4v-8h8q4 0 4 4z" fill="#8cb828"/></svg>
        </button>
        <button class="task-btn d-flex justify-content-center align-items-center" aria-label="Paint">
            <svg width="31" height="32"><path d="M2 1h24v30H2z" fill="#fff"/><path d="M4 3h20v18H4z" fill="#22529c"/><path d="M4 14c5-7 10 1 20-9v12H4z" fill="#bcd6f0"/><path d="M4 20h20v4H4z" fill="#15244c"/><path d="M30 9L13 23" stroke="#cc2233" stroke-width="2.500"/><path d="M14 21l-3 2-4 6 6-3 3-3z" fill="#ccc" stroke="#555"/></svg>
        </button>
        <button class="task-btn task-open task-stack d-flex justify-content-center align-items-center" aria-label="Word">
            <svg width="34" height="32"><path d="M8 2h18v24H2C1 16 3 6 8 2z" fill="#dce8f8" stroke="#4878c8" stroke-width="2"/><path d="M8 6l24-2-1 26-21-4z" fill="#fff" stroke="#aac"/><text x="10" y="19" font-family="Liberation Serif" font-size="14" font-weight="700" fill="#1d4a9c">W</text><path d="M23 10h6M23 14h6M23 18h6M13 22h15M13 25h15" stroke="#2d5cb0" stroke-width="1.800"/></svg>
        </button>
        <button class="task-btn task-open d-flex justify-content-center align-items-center" aria-label="Thunderbird"><svg width="32" height="32"><use href="#i-bird"/></svg></button>

        <div class="d-flex align-items-center align-self-stretch ms-auto">
            <span class="tray-lang me-2">CH</span>
            <svg class="me-1" width="15" height="15"><rect width="15" height="15" fill="#dfe4ff"/><text x="1" y="12" font-size="13" fill="#1414c8">倉</text></svg>
            <span class="tray-box d-flex justify-content-center align-items-center"><svg width="16" height="16"><path d="M8 3L3 14M8 3l5 11M5 10h6" stroke="#fff" stroke-width="2.500"/></svg></span>
            <span class="tray-box ms-1 d-flex justify-content-center align-items-center"><svg width="15" height="15"><rect width="15" height="15" fill="#fff"/><rect x="2" y="1" width="7" height="12" fill="#888"/></svg></span>
            <span class="tray-box d-flex justify-content-center align-items-center me-1"><svg width="16" height="16"><path d="M1 1h10v3H1z" fill="#3040c8"/><path d="M1 4h10v10H1z" fill="#fff"/><path d="M2 6h8M2 9h8M2 12h8" stroke="#222"/><path d="M9 5l6 6-3 .500 2 4-2 .500-1-4-2 2z" fill="#fff" stroke="#222" stroke-width=".500"/></svg></span>
            <svg class="mx-2" width="8" height="6"><path d="M0 5l4-4 4 4z" fill="#e8e8f0"/></svg>
            <svg class="ms-1" width="16" height="16"><path d="M0 5h3l4-4v14l-4-4H0z" fill="#eee"/><circle cx="10.500" cy="11" r="5" fill="#d42020"/><path d="M8.500 9l4 4M12.500 9l-4 4" stroke="#fff" stroke-width="1.500"/></svg>
            <div class="clock text-center ms-2">21:26<br>14/6/2020</div>
            <button class="peek-btn align-self-stretch p-0" aria-label="Show desktop"></button>
        </div>
    </footer>

<script src="https://cdn.jsdelivr.net/npm/bootstrap@5.3.0/dist/js/bootstrap.bundle.min.js"></script>
</body>
</html>
